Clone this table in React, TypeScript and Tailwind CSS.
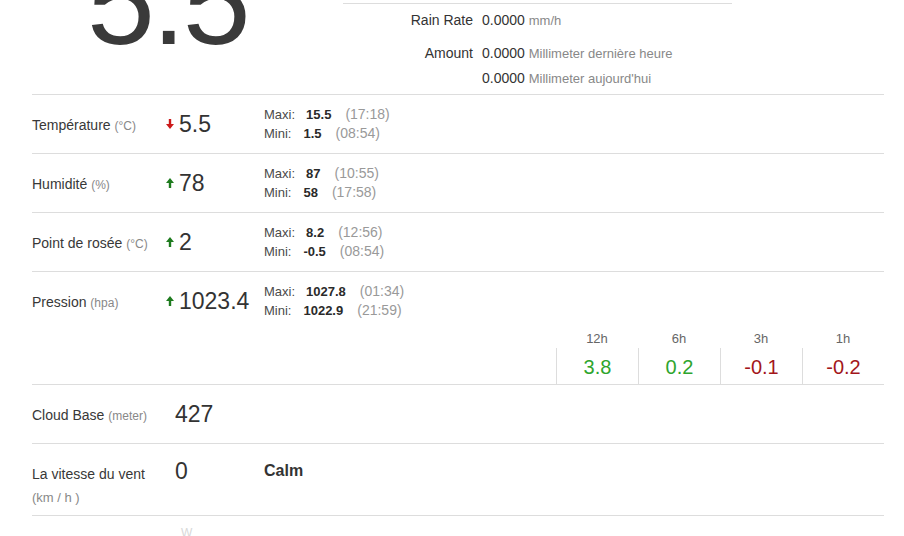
import React from "react";

const ArrowUp = () => (
  <svg width="8" height="10" viewBox="0 0 8 10" className="shrink-0">
    <path d="M4 0 L8 5 L5.2 5 L5.2 10 L2.8 10 L2.8 5 L0 5 Z" fill="#1e7b1e" />
  </svg>
);
const ArrowDown = () => (
  <svg width="8" height="10" viewBox="0 0 8 10" className="shrink-0">
    <path d="M4 10 L8 5 L5.2 5 L5.2 0 L2.8 0 L2.8 5 L0 5 Z" fill="#cc1a1a" />
  </svg>
);

type RowProps = {
  label: string;
  unit: string;
  value: string;
  dir: "up" | "down";
  maxV: string;
  maxT: string;
  minV: string;
  minT: string;
};

const MainRow = ({ label, unit, value, dir, maxV, maxT, minV, minT }: RowProps) => (
  <div className="flex h-[58px] items-center">
    <div className="w-[133px] pt-[3px] text-[14px] leading-[20px] text-[#383838]">
      {label} <span className="text-[12px] text-[#888]">{unit}</span>
    </div>
    <div className="flex w-[99px] items-center">
      <div className="ml-[1px]">{dir === "up" ? <ArrowUp /> : <ArrowDown />}</div>
      <div className="ml-[5px] text-[23px] leading-[28px] text-[#333]">{value}</div>
    </div>
    <div className="text-[13px] leading-[19px] text-[#4a4a4a]">
      <div>
        Maxi:<span className="ml-[11px] font-bold text-[#2a2a2a]">{maxV}</span>
        <span className="ml-[14px] text-[14px] text-[#999]">{maxT}</span>
      </div>
      <div>
        Mini:<span className="ml-[12px] font-bold text-[#2a2a2a]">{minV}</span>
        <span className="ml-[14px] text-[14px] text-[#999]">{minT}</span>
      </div>
    </div>
  </div>
);

const trends = [
  { h: "12h", v: "3.8", up: true },
  { h: "6h", v: "0.2", up: true },
  { h: "3h", v: "-0.1", up: false },
  { h: "1h", v: "-0.2", up: false },
];

export default function App() {
  return (
    <div
      className="h-[536px] w-[904px] overflow-hidden bg-white pl-[32px] pr-[20px]"
      style={{ fontFamily: "'Liberation Sans', Arial, sans-serif" }}
    >
      {/* top section */}
      <div className="flex h-[95px] border-b border-[#ddd]">
        <div className="w-[311px] pl-[55px]">
          <div className="mt-[-59px] text-[122px] leading-none tracking-[-3px] text-[#3a3a3a]">5.5</div>
        </div>
        <div className="mt-[3px] h-[88px] w-[389px] border-t border-[#ddd] text-[14px] text-[#333]">
          <div className="flex pt-[5px] leading-[22px]">
            <div className="w-[130px] text-right">Rain Rate</div>
            <div className="ml-[9px]">
              0.0000 <span className="text-[13px] text-[#888]">mm/h</span>
            </div>
          </div>
          <div className="mt-[9px] flex leading-[25px]">
            <div className="w-[130px] text-right">Amount</div>
            <div className="ml-[9px]">
              <div>
                0.0000 <span className="text-[13px] text-[#888]">Millimeter dernière heure</span>
              </div>
              <div>
                0.0000 <span className="text-[13px] text-[#888]">Millimeter aujourd'hui</span>
              </div>
            </div>
          </div>
        </div>
      </div>

      <div className="border-b border-[#ddd]">
        <MainRow label="Température" unit="(°C)" value="5.5" dir="down" maxV="15.5" maxT="(17:18)" minV="1.5" minT="(08:54)" />
      </div>
      <div className="border-b border-[#ddd]">
        <MainRow label="Humidité" unit="(%)" value="78" dir="up" maxV="87" maxT="(10:55)" minV="58" minT="(17:58)" />
      </div>
      <div className="border-b border-[#ddd]">
        <MainRow label="Point de rosée" unit="(°C)" value="2" dir="up" maxV="8.2" maxT="(12:56)" minV="-0.5" minT="(08:54)" />
      </div>
      <div className="border-b border-[#ddd]">
        <MainRow label="Pression" unit="(hpa)" value="1023.4" dir="up" maxV="1027.8" maxT="(01:34)" minV="1022.9" minT="(21:59)" />
        <div className="flex justify-end">
          <div className="grid w-[328px] grid-cols-4">
            {trends.map((t) => (
              <div key={t.h} className="h-[18px] text-center text-[13px] leading-[18px] text-[#666]">
                {t.h}
              </div>
            ))}
            {trends.map((t) => (
              <div
                key={t.h + "v"}
                className={
                  "flex h-[36px] items-center justify-center border-l border-[#ddd] pt-[2px] text-[20px] " +
                  (t.up ? "text-[#2ea52e]" : "text-[#a3161b]")
                }
              >
                {t.v}
              </div>
            ))}
          </div>
        </div>
      </div>

      <div className="flex h-[59px] items-center border-b border-[#ddd]">
        <div className="w-[133px] pt-[2px] text-[14px] leading-[20px] text-[#383838]">
          Cloud Base <span className="text-[12px] text-[#888]">(meter)</span>
        </div>
        <div className="pl-[10px] text-[23px] leading-[28px] text-[#333]">427</div>
      </div>

      <div className="flex h-[72px] items-start border-b border-[#ddd]">
        <div className="w-[133px] pt-[18px] text-[14px] leading-[24px] text-[#383838]">
          <div>La vitesse du vent</div>
          <div className="text-[13px] text-[#888]">(km / h )</div>
        </div>
        <div className="w-[99px] pl-[10px] pt-[15px] text-[23px] leading-[24px] text-[#333]">0</div>
        <div className="pt-[15px] text-[16px] font-bold leading-[24px] text-[#333]">Calm</div>
      </div>

      <div className="flex">
        <div className="w-[133px]" />
        <div className="pl-[16px] pt-[10px] text-[12px] leading-[14px] text-[#d8d8d8]">W</div>
      </div>
    </div>
  );
}
